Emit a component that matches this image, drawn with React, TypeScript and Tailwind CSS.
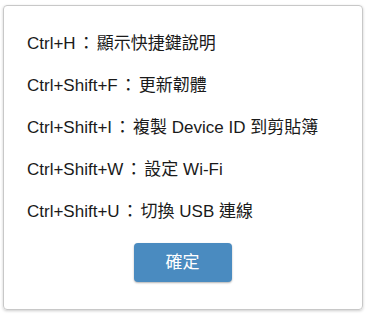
export default function App() {
  const lines: [string, string][] = [
    ["Ctrl+H", "顯示快捷鍵說明"],
    ["Ctrl+Shift+F", "更新韌體"],
    ["Ctrl+Shift+I", "複製 Device ID 到剪貼簿"],
    ["Ctrl+Shift+W", "設定 Wi‑Fi"],
    ["Ctrl+Shift+U", "切換 USB 連線"],
  ];
  return (
    <div className="w-[372px] h-[320px] bg-white pt-[5px] pl-[3px]" style={{ fontFamily: '"Liberation Sans", "Noto Sans CJK TC", sans-serif' }}>
      <div className="w-[360px] h-[305px] border border-[#c8c8c8] rounded-[4px] shadow-[0_1px_3px_rgba(0,0,0,0.2)] pt-[17px] pl-[23px] flex flex-col">
        {lines.map(([k, d]) => (
          <div key={k} className="text-[17px] leading-[42px] text-[#1a1a1a] whitespace-nowrap">
            {k}
            <span className="mx-[2px]">：</span>
            {d}
          </div>
        ))}
        <div className="flex justify-center pr-[23px] mt-[10px]">
          <button className="w-[98px] h-[39px] bg-[#4a8bc0] rounded-[4px] text-white text-[17px] shadow-[0_1px_2px_rgba(0,0,0,0.3)] ml-[-1px]">確定</button>
        </div>
      </div>
    </div>
  );
}
